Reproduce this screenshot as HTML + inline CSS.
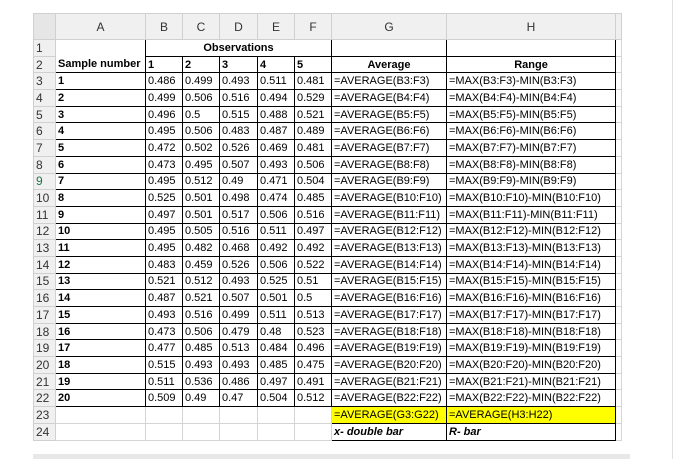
<!DOCTYPE html><html><head><style>
body{margin:0;background:#fff;width:685px;height:459px;overflow:hidden;position:relative;font-family:"Liberation Sans",Arial,sans-serif;}
table{position:absolute;left:33px;top:13px;border-collapse:collapse;table-layout:fixed;font-size:11px;}
td{height:15.7px;padding:0 2px;border:1px solid #d4d4d4;white-space:nowrap;overflow:hidden;line-height:14px;color:#000}
tr.h td{background:#f0f0f0;text-align:center;color:#333;font-size:12px;height:25px;border-color:#d0d0d0}
td.rh{background:#f0f0f0;color:#333;font-size:12px;text-align:left;padding-left:2px;border-color:#d0d0d0}
td.b{border:1px solid #000}
.bold{font-weight:bold}
.c{text-align:center}
.y{background:#ffff00}
.i{font-style:italic;font-weight:bold}
</style></head><body>
<table>
<colgroup><col style="width:22px"><col style="width:90px"><col style="width:37px"><col style="width:37px"><col style="width:38px"><col style="width:37px"><col style="width:37px"><col style="width:115px"><col style="width:169px"><col style="width:6px"></colgroup>
<tr class="h"><td style="background:#e6e6e6"></td><td>A</td><td>B</td><td>C</td><td>D</td><td>E</td><td>F</td><td>G</td><td>H</td><td></td></tr>
<tr><td class="rh">1</td><td class="b" style="border-bottom:none"></td><td class="b bold c" colspan="5">Observations</td><td class="b"></td><td class="b"></td><td></td></tr>
<tr><td class="rh">2</td><td class="b bold" style="border-top:none">Sample number</td><td class="b bold">1</td><td class="b bold">2</td><td class="b bold">3</td><td class="b bold">4</td><td class="b bold">5</td><td class="b bold c">Average</td><td class="b bold c">Range</td><td></td></tr>
<tr><td class="rh">3</td><td class="b bold">1</td><td class="b">0.486</td><td class="b">0.499</td><td class="b">0.493</td><td class="b">0.511</td><td class="b">0.481</td><td class="b">=AVERAGE(B3:F3)</td><td class="b">=MAX(B3:F3)-MIN(B3:F3)</td><td></td></tr>
<tr><td class="rh">4</td><td class="b bold">2</td><td class="b">0.499</td><td class="b">0.506</td><td class="b">0.516</td><td class="b">0.494</td><td class="b">0.529</td><td class="b">=AVERAGE(B4:F4)</td><td class="b">=MAX(B4:F4)-MIN(B4:F4)</td><td></td></tr>
<tr><td class="rh">5</td><td class="b bold">3</td><td class="b">0.496</td><td class="b">0.5</td><td class="b">0.515</td><td class="b">0.488</td><td class="b">0.521</td><td class="b">=AVERAGE(B5:F5)</td><td class="b">=MAX(B5:F5)-MIN(B5:F5)</td><td></td></tr>
<tr><td class="rh">6</td><td class="b bold">4</td><td class="b">0.495</td><td class="b">0.506</td><td class="b">0.483</td><td class="b">0.487</td><td class="b">0.489</td><td class="b">=AVERAGE(B6:F6)</td><td class="b">=MAX(B6:F6)-MIN(B6:F6)</td><td></td></tr>
<tr><td class="rh">7</td><td class="b bold">5</td><td class="b">0.472</td><td class="b">0.502</td><td class="b">0.526</td><td class="b">0.469</td><td class="b">0.481</td><td class="b">=AVERAGE(B7:F7)</td><td class="b">=MAX(B7:F7)-MIN(B7:F7)</td><td></td></tr>
<tr><td class="rh">8</td><td class="b bold">6</td><td class="b">0.473</td><td class="b">0.495</td><td class="b">0.507</td><td class="b">0.493</td><td class="b">0.506</td><td class="b">=AVERAGE(B8:F8)</td><td class="b">=MAX(B8:F8)-MIN(B8:F8)</td><td></td></tr>
<tr><td class="rh" style="color:#217346">9</td><td class="b bold">7</td><td class="b">0.495</td><td class="b">0.512</td><td class="b">0.49</td><td class="b">0.471</td><td class="b">0.504</td><td class="b">=AVERAGE(B9:F9)</td><td class="b">=MAX(B9:F9)-MIN(B9:F9)</td><td></td></tr>
<tr><td class="rh">10</td><td class="b bold">8</td><td class="b">0.525</td><td class="b">0.501</td><td class="b">0.498</td><td class="b">0.474</td><td class="b">0.485</td><td class="b">=AVERAGE(B10:F10)</td><td class="b">=MAX(B10:F10)-MIN(B10:F10)</td><td></td></tr>
<tr><td class="rh">11</td><td class="b bold">9</td><td class="b">0.497</td><td class="b">0.501</td><td class="b">0.517</td><td class="b">0.506</td><td class="b">0.516</td><td class="b">=AVERAGE(B11:F11)</td><td class="b">=MAX(B11:F11)-MIN(B11:F11)</td><td></td></tr>
<tr><td class="rh">12</td><td class="b bold">10</td><td class="b">0.495</td><td class="b">0.505</td><td class="b">0.516</td><td class="b">0.511</td><td class="b">0.497</td><td class="b">=AVERAGE(B12:F12)</td><td class="b">=MAX(B12:F12)-MIN(B12:F12)</td><td></td></tr>
<tr><td class="rh">13</td><td class="b bold">11</td><td class="b">0.495</td><td class="b">0.482</td><td class="b">0.468</td><td class="b">0.492</td><td class="b">0.492</td><td class="b">=AVERAGE(B13:F13)</td><td class="b">=MAX(B13:F13)-MIN(B13:F13)</td><td></td></tr>
<tr><td class="rh">14</td><td class="b bold">12</td><td class="b">0.483</td><td class="b">0.459</td><td class="b">0.526</td><td class="b">0.506</td><td class="b">0.522</td><td class="b">=AVERAGE(B14:F14)</td><td class="b">=MAX(B14:F14)-MIN(B14:F14)</td><td></td></tr>
<tr><td class="rh">15</td><td class="b bold">13</td><td class="b">0.521</td><td class="b">0.512</td><td class="b">0.493</td><td class="b">0.525</td><td class="b">0.51</td><td class="b">=AVERAGE(B15:F15)</td><td class="b">=MAX(B15:F15)-MIN(B15:F15)</td><td></td></tr>
<tr><td class="rh">16</td><td class="b bold">14</td><td class="b">0.487</td><td class="b">0.521</td><td class="b">0.507</td><td class="b">0.501</td><td class="b">0.5</td><td class="b">=AVERAGE(B16:F16)</td><td class="b">=MAX(B16:F16)-MIN(B16:F16)</td><td></td></tr>
<tr><td class="rh">17</td><td class="b bold">15</td><td class="b">0.493</td><td class="b">0.516</td><td class="b">0.499</td><td class="b">0.511</td><td class="b">0.513</td><td class="b">=AVERAGE(B17:F17)</td><td class="b">=MAX(B17:F17)-MIN(B17:F17)</td><td></td></tr>
<tr><td class="rh">18</td><td class="b bold">16</td><td class="b">0.473</td><td class="b">0.506</td><td class="b">0.479</td><td class="b">0.48</td><td class="b">0.523</td><td class="b">=AVERAGE(B18:F18)</td><td class="b">=MAX(B18:F18)-MIN(B18:F18)</td><td></td></tr>
<tr><td class="rh">19</td><td class="b bold">17</td><td class="b">0.477</td><td class="b">0.485</td><td class="b">0.513</td><td class="b">0.484</td><td class="b">0.496</td><td class="b">=AVERAGE(B19:F19)</td><td class="b">=MAX(B19:F19)-MIN(B19:F19)</td><td></td></tr>
<tr><td class="rh">20</td><td class="b bold">18</td><td class="b">0.515</td><td class="b">0.493</td><td class="b">0.493</td><td class="b">0.485</td><td class="b">0.475</td><td class="b">=AVERAGE(B20:F20)</td><td class="b">=MAX(B20:F20)-MIN(B20:F20)</td><td></td></tr>
<tr><td class="rh">21</td><td class="b bold">19</td><td class="b">0.511</td><td class="b">0.536</td><td class="b">0.486</td><td class="b">0.497</td><td class="b">0.491</td><td class="b">=AVERAGE(B21:F21)</td><td class="b">=MAX(B21:F21)-MIN(B21:F21)</td><td></td></tr>
<tr><td class="rh">22</td><td class="b bold">20</td><td class="b">0.509</td><td class="b">0.49</td><td class="b">0.47</td><td class="b">0.504</td><td class="b">0.512</td><td class="b">=AVERAGE(B22:F22)</td><td class="b">=MAX(B22:F22)-MIN(B22:F22)</td><td></td></tr>
<tr><td class="rh">23</td><td></td><td></td><td></td><td></td><td></td><td></td><td class="b y">=AVERAGE(G3:G22)</td><td class="b y">=AVERAGE(H3:H22)</td><td></td></tr>
<tr><td class="rh">24</td><td></td><td></td><td></td><td></td><td></td><td></td><td class="b i">x- double bar</td><td class="b i">R- bar</td><td></td></tr>
</table>
<div style="position:absolute;left:33px;top:454px;width:597px;height:5px;background:#e8e8e8"></div>
<div style="position:absolute;left:672px;top:0;width:1px;height:459px;background:#e0e0e0"></div>
</body></html>
